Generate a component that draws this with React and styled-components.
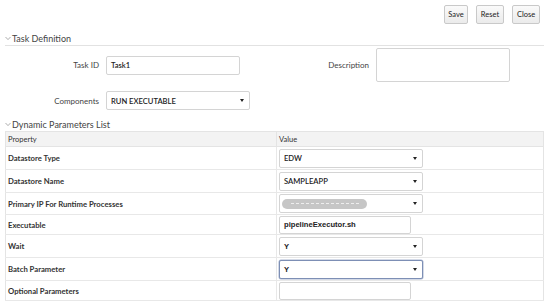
import React from "react";
import styled, { createGlobalStyle } from "styled-components";

const GlobalStyle = createGlobalStyle`
  html, body { margin: 0; padding: 0; background: #fff; }
  body { font-family: Lato, "Open Sans", sans-serif; color: #333; }
`;

const Page = styled.div`
  width: 544px;
  height: 307px;
  overflow: hidden;
  padding-left: 5px;
  box-sizing: border-box;
`;

const Toolbar = styled.div`
  display: flex;
  justify-content: flex-end;
  gap: 8px;
  padding: 5px 4px 0 0;
  height: 19px;
`;

const Button = styled.button`
  height: 19px;
  padding: 0;
  width: ${(p) => p.w}px;
  font-family: Lato, sans-serif;
  font-size: 7.5px;
  color: #222;
  background: linear-gradient(#fafafa, #ebebeb);
  border: 1px solid #c9c9c9;
  border-radius: 2px;
`;

const SectionHead = styled.div`
  display: flex;
  align-items: center;
  gap: 1px;
  font-size: 9px;
  color: #444;
  height: ${(p) => p.h}px;
  margin-top: ${(p) => p.mt}px;
  padding-top: ${(p) => p.pt || 0}px;
  border-bottom: ${(p) => (p.line ? "1px solid #e2e2e2" : "none")};
  box-sizing: border-box;
`;

const Chevron = () => (
  <svg width="6" height="5" viewBox="0 0 6 5">
    <path d="M0.5 1 L3 3.6 L5.5 1" fill="none" stroke="#999" strokeWidth="0.8" />
  </svg>
);

const FormGrid = styled.div`
  display: grid;
  grid-template-columns: 94px 134px 122px 134px;
  column-gap: 7px;
  row-gap: 9px;
  align-items: center;
  padding-top: 2px;
`;

const Label = styled.label`
  text-align: right;
  font-size: 8px;
  color: #444;
`;

const TextInput = styled.div`
  height: ${(p) => p.h || 19}px;
  width: ${(p) => p.w}px;
  box-sizing: border-box;
  border: 1px solid ${(p) => (p.focus ? "#7d8fb5" : "#d4d4d4")};
  border-radius: 2px;
  background: #fff;
  display: flex;
  align-items: center;
  justify-content: space-between;
  padding: 0 5px 0 4px;
  font-size: 7.6px;
  font-family: ${(p) => (p.arial ? '"Liberation Sans", Arial, sans-serif' : "Lato, sans-serif")};
  font-weight: ${(p) => (p.arial ? 700 : 600)};
  color: #222;
  box-shadow: ${(p) => (p.focus ? "0 0 0 0.5px #aab6d0" : "none")};
`;

const Caret = styled.span`
  width: 0;
  height: 0;
  border-left: 2.2px solid transparent;
  border-right: 2.2px solid transparent;
  border-top: 3.5px solid #222;
`;

const Table = styled.table`
  width: 539px;
  border-collapse: collapse;
  border: 1px solid #e4e4e4;
  table-layout: fixed;
`;

const HeadCell = styled.th`
  background: #f3f3f3;
  height: 14px;
  padding: 0 0 0 2px;
  text-align: left;
  font-weight: 400;
  font-size: 7.5px;
  color: #333;
  border-bottom: 1px solid #e4e4e4;
  border-left: ${(p) => (p.divider ? "1px solid #e4e4e4" : "none")};
  width: ${(p) => p.w}px;
`;

const Cell = styled.td`
  height: ${(p) => p.h}px;
  padding: 0 0 0 2px;
  font-size: 7.7px;
  font-weight: 700;
  color: #333;
  border-bottom: 1px solid #e8e8e8;
  border-left: ${(p) => (p.divider ? "1px solid #e8e8e8" : "none")};
  box-sizing: border-box;
`;

const Redacted = styled.span`
  width: 85px;
  height: 10px;
  margin-left: -2px;
  border-radius: 5px;
  background: #c6c6c6;
  display: flex;
  align-items: center;
  justify-content: center;
  &::after {
    content: "";
    width: 68px;
    border-top: 1px dashed #eee;
  }
`;

const Select = ({ value, focus, children }) => (
  <TextInput w={144} focus={focus} arial={value === "Y"}>
    {children || value}
    <Caret />
  </TextInput>
);

const rows = [
  { name: "Datastore Type", h: 23, el: <Select value="EDW" /> },
  { name: "Datastore Name", h: 23, el: <Select value="SAMPLEAPP" /> },
  { name: "Primary IP For Runtime Processes", h: 22, el: <Select><Redacted /></Select> },
  { name: "Executable", h: 20, el: <TextInput w={132} h={18} arial>pipelineExecutor.sh</TextInput> },
  { name: "Wait", h: 23, el: <Select value="Y" /> },
  { name: "Batch Parameter", h: 23, el: <Select value="Y" focus /> },
  { name: "Optional Parameters", h: 20, el: <TextInput w={132} h={18} /> },
];

export default function App() {
  return (
    <Page>
      <GlobalStyle />
      <Toolbar>
        <Button w={24}>Save</Button>
        <Button w={28}>Reset</Button>
        <Button w={28}>Close</Button>
      </Toolbar>
      <SectionHead h={14} mt={8} line>
        <Chevron />
        Task Definition
      </SectionHead>
      <FormGrid>
        <Label>Task ID</Label>
        <TextInput w={134}>Task1</TextInput>
        <Label>Description</Label>
        <TextInput w={134} h={34} />
        <Label>Components</Label>
        <Select value="RUN EXECUTABLE" />
      </FormGrid>
      <SectionHead h={21} mt={0} pt={8}>
        <Chevron />
        Dynamic Parameters List
      </SectionHead>
      <Table>
        <thead>
          <tr>
            <HeadCell w={268}>Property</HeadCell>
            <HeadCell divider>Value</HeadCell>
          </tr>
        </thead>
        <tbody>
          {rows.map((r) => (
            <tr key={r.name}>
              <Cell h={r.h}>{r.name}</Cell>
              <Cell h={r.h} divider>{r.el}</Cell>
            </tr>
          ))}
        </tbody>
      </Table>
    </Page>
  );
}
